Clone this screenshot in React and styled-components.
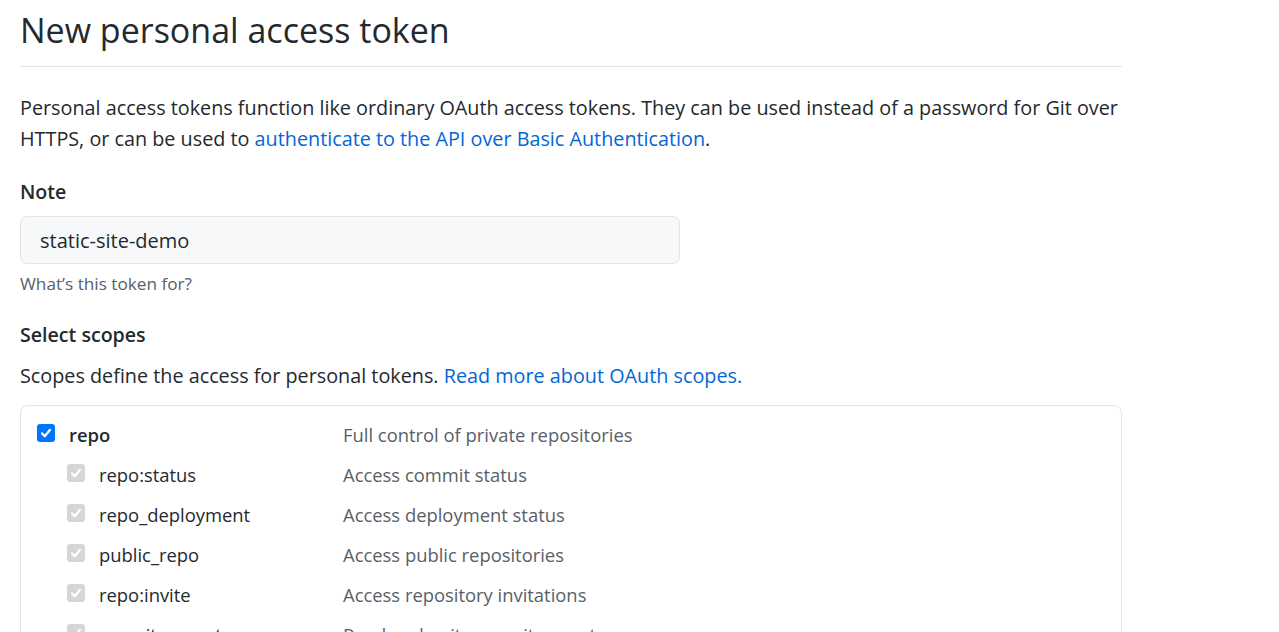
import styled, { createGlobalStyle } from "styled-components";

const GlobalStyle = createGlobalStyle`
  body {
    margin: 0;
    background: #ffffff;
    color: #24292e;
    font-family: "Open Sans", "Noto Sans", sans-serif;
  }
`;

const Page = styled.div`
  width: 1102px;
  padding: 5px 20px 0;
`;

const Heading = styled.h2`
  margin: 0;
  font-size: 34px;
  font-weight: 400;
  line-height: 50px;
  padding-bottom: 11px;
  border-bottom: 1px solid #e1e4e8;
`;

const Intro = styled.p`
  margin: 25px 0 0;
  font-size: 19.8px;
  line-height: 31px;
`;

const Link = styled.a`
  color: #0366d6;
  text-decoration: none;
`;

const Label = styled.h3`
  margin: ${(p) => p.$top}px 0 0;
  font-size: 19.6px;
  font-weight: 600;
  line-height: 30px;
`;

const Input = styled.div`
  box-sizing: border-box;
  margin-top: 9px;
  width: 660px;
  height: 48px;
  padding: 0 19px;
  display: flex;
  align-items: center;
  background: #f6f8fa;
  border: 1px solid #e1e4e8;
  border-radius: 7px;
  font-size: 20px;
`;

const Hint = styled.p`
  margin: 8px 0 0;
  font-size: 17.2px;
  line-height: 24px;
  color: #586069;
`;

const Text = styled.p`
  margin: 11px 0 0;
  font-size: 19.8px;
  line-height: 30px;
`;

const ScopeBox = styled.div`
  margin-top: 14px;
  padding-top: 8px;
  height: 300px;
  border: 1px solid #e1e4e8;
  border-radius: 8px;
`;

const Row = styled.div`
  display: flex;
  align-items: center;
  height: 40px;
  padding-left: 16px;
  font-size: 18.4px;
`;

const Name = styled.div`
  display: flex;
  align-items: center;
  gap: 14px;
  width: 306px;
  padding-left: ${(p) => (p.$child ? 30 : 0)}px;
  box-sizing: border-box;
  font-weight: ${(p) => (p.$child ? 400 : 600)};
  color: #24292e;
`;

const Desc = styled.div`
  color: #586069;
`;

const Box = styled.span`
  width: 18px;
  height: 18px;
  margin-top: -3px;
  border-radius: 3px;
  background: ${(p) => (p.$disabled ? "#d6d6d6" : "#0075ff")};
  display: flex;
  align-items: center;
  justify-content: center;
  flex-shrink: 0;
`;

const Check = ({ disabled }) => (
  <Box $disabled={disabled}>
    <svg width="14" height="14" viewBox="0 0 14 14">
      <path
        d="M3 7.4 L5.8 10.2 L11 3.8"
        fill="none"
        stroke="#fff"
        strokeWidth="2.2"
        strokeLinecap="round"
        strokeLinejoin="round"
      />
    </svg>
  </Box>
);

const scopes = [
  ["repo:status", "Access commit status"],
  ["repo_deployment", "Access deployment status"],
  ["public_repo", "Access public repositories"],
  ["repo:invite", "Access repository invitations"],
  ["security_events", "Read and write security events"],
];

export default function App() {
  return (
    <>
      <GlobalStyle />
      <Page>
        <Heading>New personal access token</Heading>
        <Intro>
          Personal access tokens function like ordinary OAuth access tokens. They can be used
          instead of a password for Git over HTTPS, or can be used to{" "}
          <Link href="#">authenticate to the API over Basic Authentication</Link>.
        </Intro>
        <Label $top={23}>Note</Label>
        <Input>static-site-demo</Input>
        <Hint>What’s this token for?</Hint>
        <Label $top={24}>Select scopes</Label>
        <Text>
          Scopes define the access for personal tokens.{" "}
          <Link href="#">Read more about OAuth scopes.</Link>
        </Text>
        <ScopeBox>
          <Row>
            <Name>
              <Check />
              repo
            </Name>
            <Desc>Full control of private repositories</Desc>
          </Row>
          {scopes.map(([name, desc]) => (
            <Row key={name}>
              <Name $child>
                <Check disabled />
                {name}
              </Name>
              <Desc>{desc}</Desc>
            </Row>
          ))}
        </ScopeBox>
      </Page>
    </>
  );
}
